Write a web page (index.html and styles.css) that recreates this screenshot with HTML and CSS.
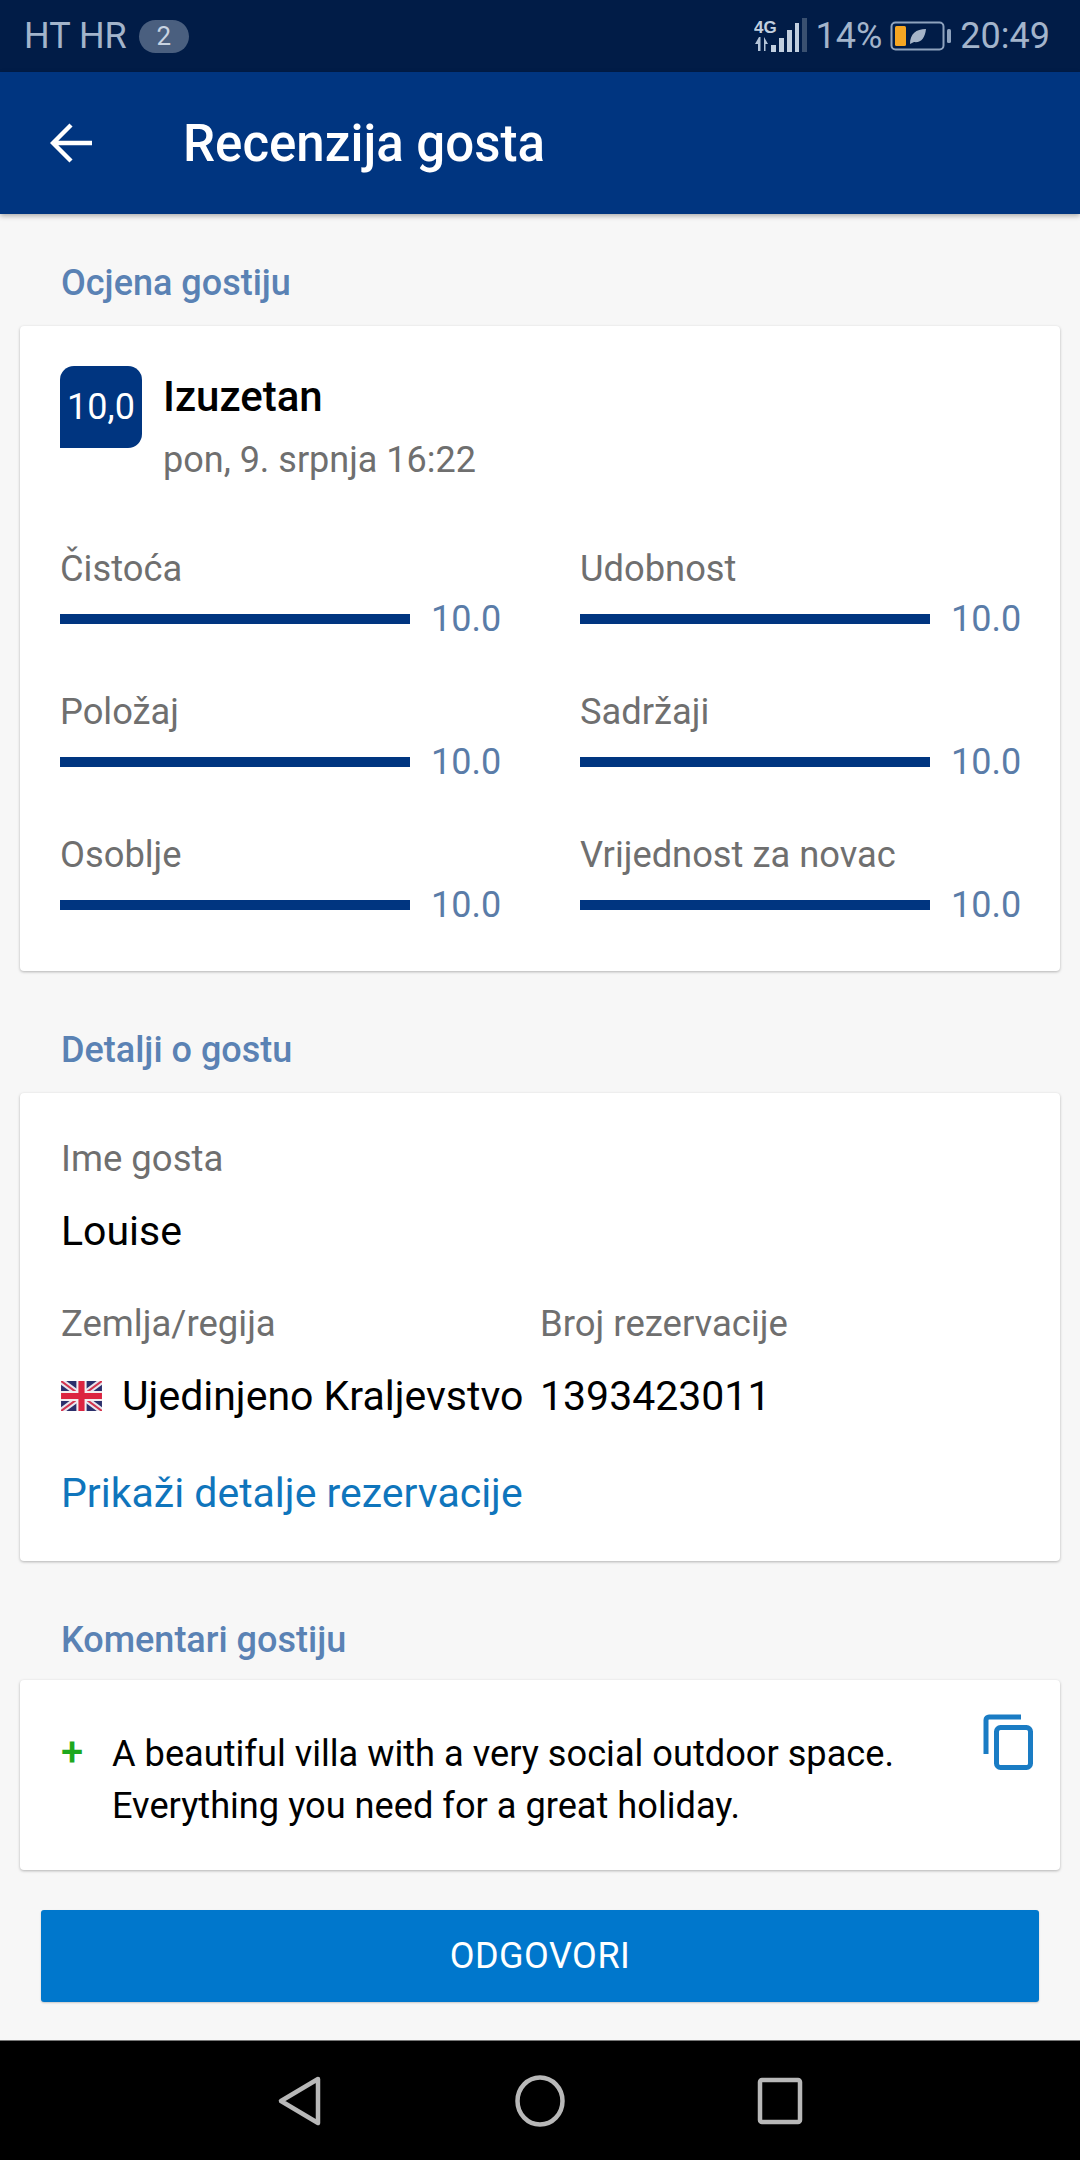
FILE: index.html
```html
<!DOCTYPE html>
<html lang="hr">
<head>
<meta charset="utf-8">
<title>Recenzija gosta</title>
<link rel="stylesheet" href="styles.css">
</head>
<body>
<div class="phone">
  <div class="status">
    <div class="status-left"><span>HT HR</span><span class="badge">2</span></div>
    <div class="status-right">
      <svg class="signal" width="54" height="36" viewBox="0 0 54 36">
        <text x="0" y="15" class="net">4G</text>
        <path d="M5 19l-4 7h3v7h2.500V19zM10 33V19l4 7h-2.500v7z" fill="#b4c4d8"/>
        <rect x="17" y="27" width="5" height="7" fill="#c2cfdf"/>
        <rect x="25" y="20" width="5" height="14" fill="#c2cfdf"/>
        <rect x="33" y="12" width="5" height="22" fill="#c2cfdf"/>
        <rect x="41" y="5" width="4" height="29" fill="#c2cfdf"/>
        <rect x="48" y="0" width="5" height="34" fill="#3a5070"/>
      </svg>
      <span>14%</span>
      <svg class="battery" width="62" height="32" viewBox="0 0 62 32">
        <rect x="1.500" y="2.500" width="52" height="27" rx="4" fill="none" stroke="#8ea2bd" stroke-width="2"/>
        <rect x="5" y="6" width="11" height="20" rx="1.500" fill="#f5a623"/>
        <path d="M20 24c0-10 6-15 16-15-1 9-5 14-12 13z" fill="#a5b4c8"/>
        <rect x="57" y="9" width="4" height="14" rx="1.500" fill="#8ea2bd"/>
      </svg>
      <span>20:49</span>
    </div>
  </div>

  <header class="appbar">
    <svg class="back" width="44" height="44" viewBox="0 0 44 44"><path d="M42 22H5M21 4L3 22l18 18" fill="none" stroke="#fff" stroke-width="4.400"/></svg>
    <h1 class="appbar-title">Recenzija gosta</h1>
  </header>

  <main class="content">
    <h2 class="section-title">Ocjena gostiju</h2>
    <section class="card score-card">
      <div class="score-head">
        <div class="score-box">10,0</div>
        <div class="score-text">
          <div class="score-word">Izuzetan</div>
          <div class="score-date">pon, 9. srpnja 16:22</div>
        </div>
      </div>
      <div class="ratings">
        <div class="rating"><div class="rating-label">Čistoća</div><div class="rating-line"><div class="bar"></div><span class="rating-value">10.0</span></div></div>
        <div class="rating"><div class="rating-label">Udobnost</div><div class="rating-line"><div class="bar"></div><span class="rating-value">10.0</span></div></div>
        <div class="rating"><div class="rating-label">Položaj</div><div class="rating-line"><div class="bar"></div><span class="rating-value">10.0</span></div></div>
        <div class="rating"><div class="rating-label">Sadržaji</div><div class="rating-line"><div class="bar"></div><span class="rating-value">10.0</span></div></div>
        <div class="rating"><div class="rating-label">Osoblje</div><div class="rating-line"><div class="bar"></div><span class="rating-value">10.0</span></div></div>
        <div class="rating"><div class="rating-label">Vrijednost za novac</div><div class="rating-line"><div class="bar"></div><span class="rating-value">10.0</span></div></div>
      </div>
    </section>

    <h2 class="section-title second">Detalji o gostu</h2>
    <section class="card guest-card">
      <div class="field-label">Ime gosta</div>
      <div class="field-value">Louise</div>
      <div class="guest-columns">
        <div>
          <div class="field-label">Zemlja/regija</div>
          <div class="field-value country">
            <svg class="flag" width="41" height="30" viewBox="0 0 60 44">
              <rect width="60" height="44" fill="#2b2f6b"/>
              <path d="M0 0L60 44M60 0L0 44" stroke="#e8e6ee" stroke-width="9"/>
              <path d="M0 0L60 44M60 0L0 44" stroke="#d3354f" stroke-width="3"/>
              <path d="M30 0V44M0 22H60" stroke="#f3eef0" stroke-width="15"/>
              <path d="M30 0V44M0 22H60" stroke="#dc2440" stroke-width="9"/>
            </svg>
            <span>Ujedinjeno Kraljevstvo</span>
          </div>
        </div>
        <div>
          <div class="field-label">Broj rezervacije</div>
          <div class="field-value">1393423011</div>
        </div>
      </div>
      <a class="link">Prikaži detalje rezervacije</a>
    </section>

    <h2 class="section-title third">Komentari gostiju</h2>
    <section class="card comment-card">
      <span class="plus">+</span>
      <p class="comment">A beautiful villa with a very social outdoor space. Everything you need for a great holiday.</p>
      <svg class="copy" width="50" height="56" viewBox="0 0 50 56">
        <path d="M3 40V6a3 3 0 0 1 3-3h32" fill="none" stroke="#1a7cc4" stroke-width="5"/>
        <rect x="13.500" y="13.500" width="34" height="40" rx="4" fill="none" stroke="#1a7cc4" stroke-width="5"/>
      </svg>
    </section>

    <button class="reply">ODGOVORI</button>
  </main>

  <nav class="navbar">
    <svg width="46" height="52" viewBox="0 0 46 52"><path d="M41 4L4 26l37 22z" fill="none" stroke="#b8b8b8" stroke-width="4.500" stroke-linejoin="round"/></svg>
    <svg width="50" height="52" viewBox="0 0 50 52"><ellipse cx="25" cy="26" rx="22.500" ry="23.500" fill="none" stroke="#b8b8b8" stroke-width="4.500"/></svg>
    <svg width="46" height="48" viewBox="0 0 46 48"><rect x="3" y="3" width="40" height="42" rx="2" fill="none" stroke="#b8b8b8" stroke-width="4.500"/></svg>
  </nav>
</div>
</body>
</html>
```
FILE: styles.css
```css
* { box-sizing: border-box; }
html, body { margin: 0; padding: 0; }
body { font-family: Roboto, "Liberation Sans", sans-serif; background: #f7f7f7; }
.phone { width: 1080px; height: 2160px; display: flex; flex-direction: column; overflow: hidden; }

.status { height: 72px; flex: none; background: #011c47; color: #a3b4cb; font-size: 36px; display: flex; align-items: center; justify-content: space-between; padding: 0 30px 0 24px; }
.status-left { display: flex; align-items: center; gap: 12px; }
.badge { width: 50px; height: 33px; border-radius: 17px; background: #4a5f7f; color: #c8d3e1; font-size: 26px; display: flex; align-items: center; justify-content: center; }
.status-right { display: flex; align-items: center; gap: 8px; }
.net { font-family: "Liberation Sans", sans-serif; font-size: 17px; font-weight: 700; fill: #c2cfdf; }
.signal, .battery { display: block; }

.appbar { height: 142px; flex: none; background: #003580; display: flex; align-items: center; padding-left: 50px; gap: 89px; box-shadow: 0 2px 5px rgba(0,0,0,.3); position: relative; }
.back { display: block; }
.appbar-title { margin: 0; color: #fff; font-size: 51px; font-weight: 500; }

.content { flex: 1; display: flex; flex-direction: column; padding: 0 20px; }
.section-title { margin: 0; height: 112px; padding: 46px 0 0 41px; font-size: 36px; line-height: 46px; font-weight: 500; color: #5a82b4; }
.section-title.second, .section-title.third { height: 122px; padding-top: 56px; }
.section-title.third { height: 119px; }

.card { background: #fff; border-radius: 4px; box-shadow: 0 1px 3px rgba(0,0,0,.28); }
.score-card { height: 645px; padding: 40px 40px 0 40px; }
.score-head { display: flex; gap: 21px; }
.score-box { width: 82px; height: 82px; flex: none; background: #003580; color: #fff; font-size: 36px; border-radius: 14px 14px 14px 0; display: flex; align-items: center; justify-content: center; }
.score-word { font-size: 42px; font-weight: 500; color: #000; line-height: 46px; margin-top: 8px; }
.score-date { font-size: 36px; color: #6f6f6f; line-height: 46px; margin-top: 17px; }
.ratings { display: grid; grid-template-columns: 520px 440px; grid-auto-rows: 143px; margin-top: 63px; }
.rating-label { font-size: 36.300px; color: #6f6f6f; line-height: 46px; }
.rating-line { display: flex; align-items: center; gap: 21px; margin-top: 4px; }
.bar { width: 350px; height: 10px; flex: none; background: #003580; }
.rating-value { font-size: 36px; color: #5a7ca8; line-height: 46px; }

.guest-card { height: 468px; padding: 43px 40px 0 41px; }
.field-label { font-size: 36.500px; color: #6f6f6f; line-height: 46px; }
.field-value { font-size: 41px; color: #000; line-height: 46px; margin-top: 26px; }
.guest-columns { display: grid; grid-template-columns: 479px 1fr; margin-top: 47px; }
.country { display: flex; align-items: center; gap: 20px; }
.flag { display: block; flex: none; }
.link { display: block; margin-top: 51px; font-size: 41px; line-height: 46px; color: #0f75bc; }

.comment-card { height: 190px; padding: 48px 0 0 41px; display: flex; position: relative; }
.plus { width: 51px; flex: none; font-size: 40px; font-weight: 500; color: #1ea81e; line-height: 50px; }
.comment { margin: 0; width: 810px; font-size: 36.200px; line-height: 52px; color: #000; }
.copy { position: absolute; top: 34px; right: 27px; }

.reply { margin: 40px 21px 0; height: 92px; border: 0; border-radius: 3px; background: #0077cc; color: #fff; font: 400 36px Roboto, sans-serif; letter-spacing: .5px; box-shadow: 0 1px 2px rgba(0,0,0,.2); }

.navbar { height: 120px; flex: none; background: #000; border-top: 1px solid #777; display: flex; align-items: center; padding: 0 0 0 277px; gap: 192px; }
.navbar svg { display: block; }
```
